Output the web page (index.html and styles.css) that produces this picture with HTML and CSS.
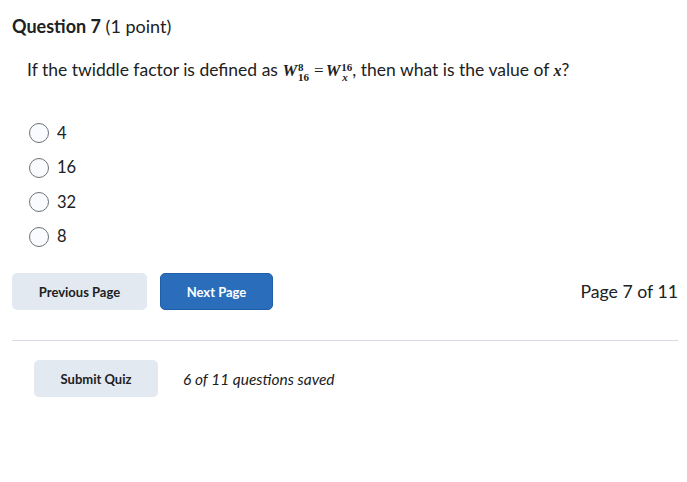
FILE: index.html
```html
<!DOCTYPE html>
<html>
<head>
<meta charset="utf-8">
<link rel="stylesheet" href="styles.css">
</head>
<body>
<div class="page">
  <h2 class="qtitle"><strong>Question 7</strong> <span class="pts">(1 point)</span></h2>
  <div class="qbody">
    <p class="qtext">If the twiddle factor is defined as <span class="math"><span class="mi">W</span><span class="ss"><span class="sup">8</span><span class="sub">16</span></span><span class="eq">=</span><span class="mi">W</span><span class="ss"><span class="sup">16</span><span class="sub ix">x</span></span></span>, then what is the value of <span class="mx">x</span>?</p>
    <div class="options">
      <label class="opt"><span class="radio"></span><span>4</span></label>
      <label class="opt"><span class="radio"></span><span>16</span></label>
      <label class="opt"><span class="radio"></span><span>32</span></label>
      <label class="opt"><span class="radio"></span><span>8</span></label>
    </div>
  </div>
  <div class="nav">
    <button class="btn btn-sec btn-prev">Previous Page</button>
    <button class="btn btn-pri">Next Page</button>
    <span class="pageinfo">Page 7 of 11</span>
  </div>
  <hr class="sep">
  <div class="submit">
    <button class="btn btn-sec btn-submit">Submit Quiz</button>
    <span class="saved">6 of 11 questions saved</span>
  </div>
</div>
</body>
</html>
```
FILE: styles.css
```css
html, body { margin: 0; padding: 0; background: #fff; }
body { font-family: Lato, "Noto Sans", sans-serif; color: #202122; }
.page { padding: 14px 9px 0 12px; }
.qtitle { margin: 0; font-size: 18px; font-weight: 400; line-height: 24px; color: #202122; }
.qtitle strong { font-weight: 700; }
.qbody { padding-left: 15px; }
.qtext { margin: 21px 0 0 0; font-size: 17.5px; line-height: 22px; height: 22px; white-space: nowrap; }
.math { font-family: "Liberation Serif", "DejaVu Serif", serif; font-weight: 700; font-style: italic; white-space: nowrap; line-height: 10px; }
.mi { font-size: 16.5px; }
.ss { display: inline-block; vertical-align: -5px; font-size: 11px; line-height: 10px; font-style: normal; margin-left: 1px; text-align: left; }
.ss .sup, .ss .sub { display: block; }
.ss .ix { font-style: italic; padding-left: 1px; }
.eq { font-style: normal; font-weight: 400; font-size: 17px; margin: 0 2px 0 5px; }
.mx { font-family: "Liberation Serif", serif; font-style: italic; font-weight: 700; font-size: 16px; }
.options { margin-top: 41.5px; display: flex; flex-direction: column; gap: 13.6px; }
.opt { display: flex; align-items: center; gap: 8px; font-size: 16.5px; line-height: 21px; height: 21px; }
.radio { width: 18px; height: 18px; border: 1px solid #6e7376; border-radius: 50%; background: #f9fbff; margin-left: 2px; }
.nav { display: flex; align-items: center; gap: 13px; margin-top: 26.2px; }
.btn { font-family: Lato, sans-serif; font-weight: 700; font-size: 13px; height: 37px; border: none; border-radius: 5px; padding: 0; cursor: pointer; }
.btn-sec { background: #e3e9f1; color: #202122; }
.btn-pri { background: #2a6ebb; color: #fff; width: 113px; border: 1px solid #1f5fa8; }
.btn-prev { width: 135px; }
.pageinfo { margin-left: auto; font-size: 17.7px; color: #202122; }
.sep { border: none; border-top: 1px solid #d7dbe1; margin: 30px 0 0 0; }
.submit { display: flex; align-items: center; gap: 25px; margin-top: 19px; padding-left: 22px; }
.btn-submit { width: 124px; }
.saved { font-style: italic; font-size: 15.5px; color: #202122; }
```
